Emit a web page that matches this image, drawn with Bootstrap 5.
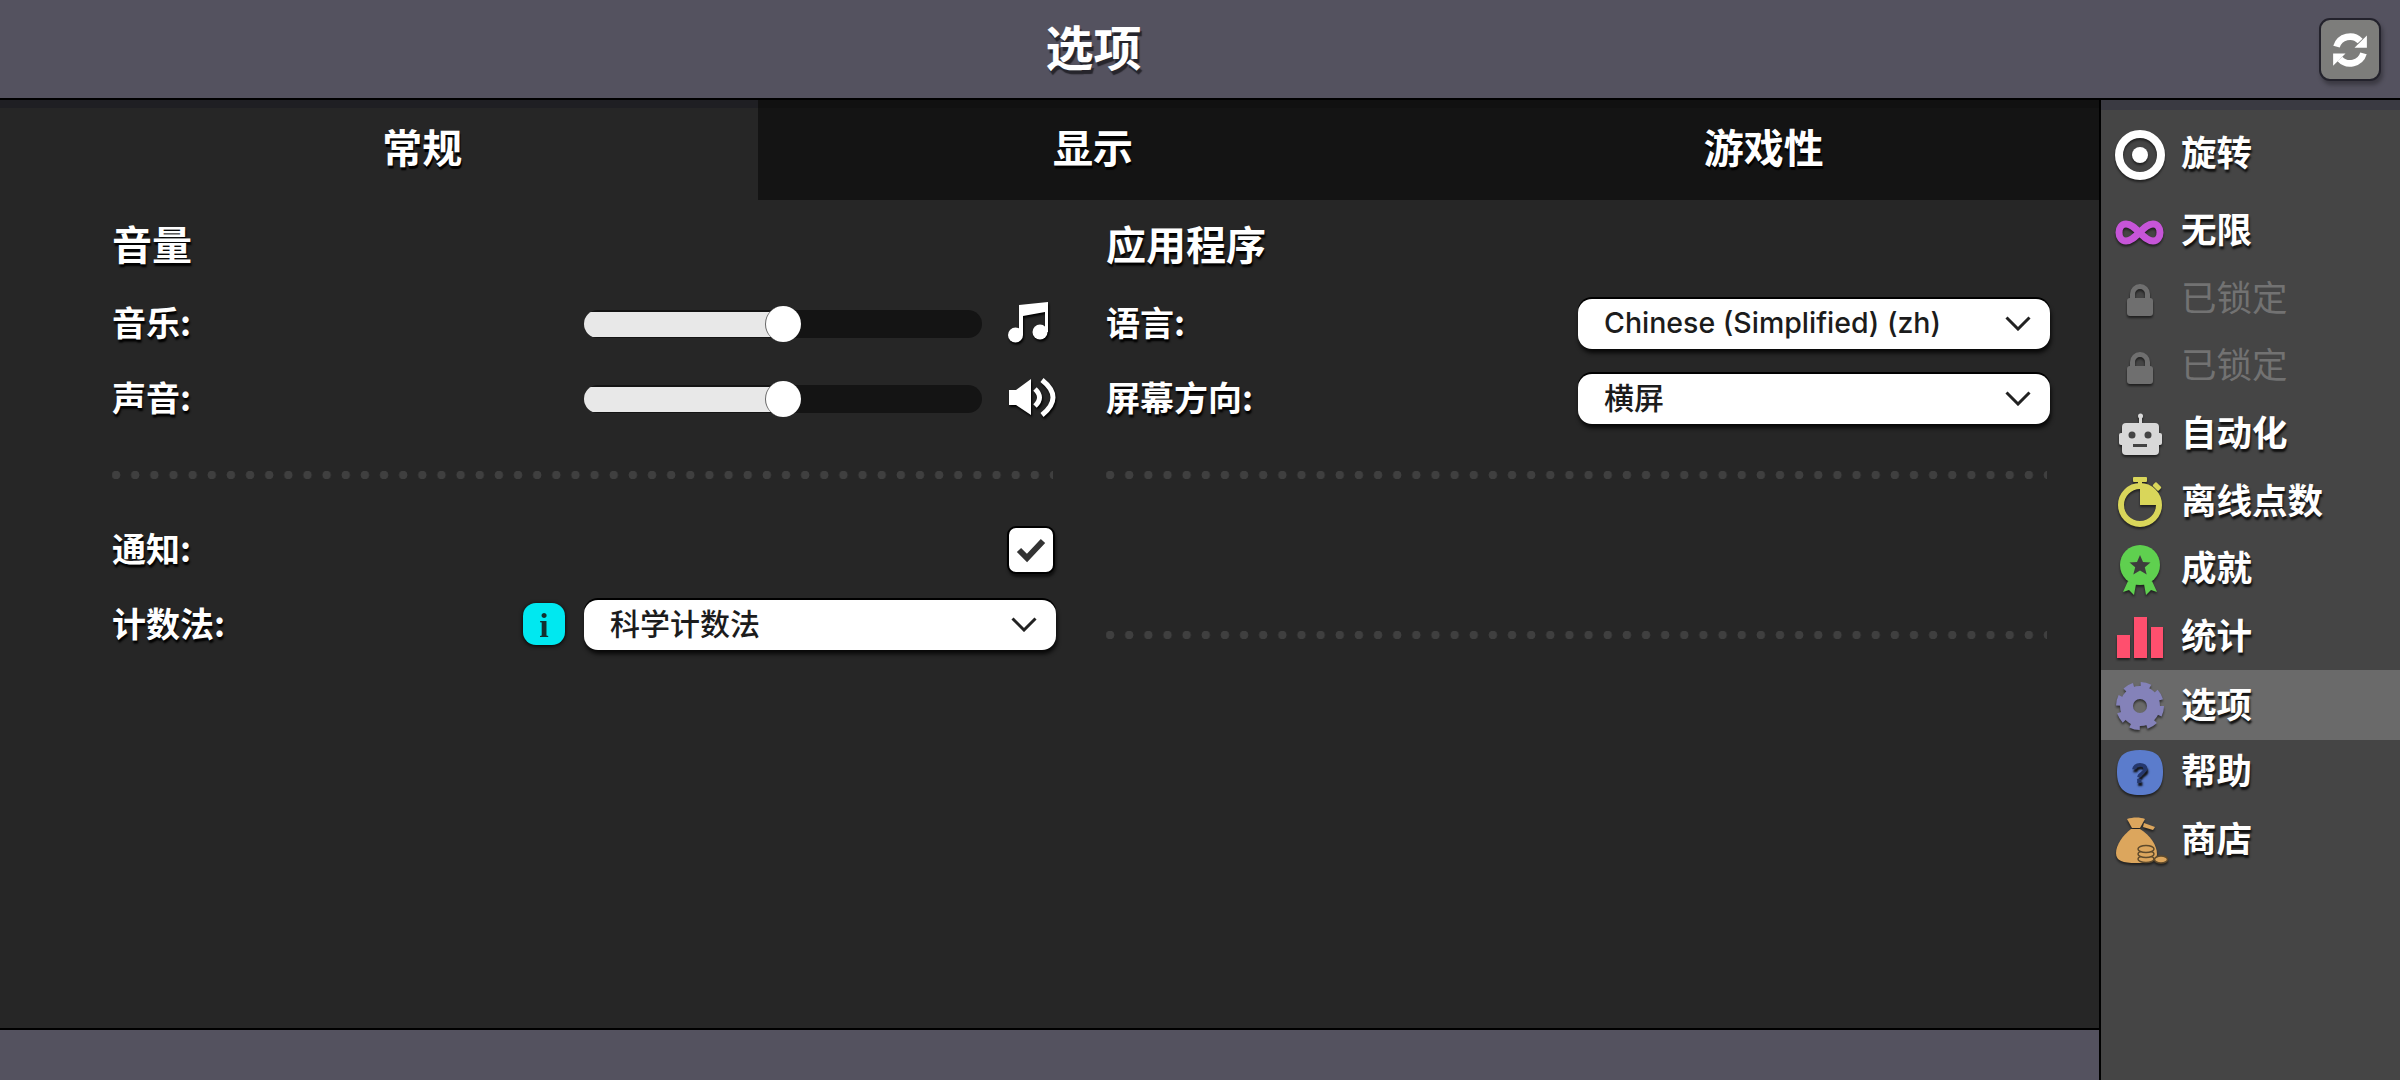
<!DOCTYPE html>
<html lang="zh-CN">
  <head>
    <meta charset="UTF-8" />
    <meta name="viewport" content="width=device-width, initial-scale=1.0" />
    <title>选项</title>
    <link
      href="https://cdn.jsdelivr.net/npm/bootstrap@5.3.0/dist/css/bootstrap.min.css"
      rel="stylesheet"
    />
    <style>
      html,
      body {
        height: 1080px;
        overflow: hidden;
      }

      body {
        background: #54525f;
        color: #fff;
        font-family: "Noto Sans CJK SC", sans-serif;
        font-weight: 700;
      }

      /* top bar */
      .top-bar {
        height: 100px;
        background: #54525f;
        border-bottom: 2px solid #000;
        flex: none;
      }

      .top-title {
        width: 2013px;
        margin-left: 87px;
        font-size: 48px;
        line-height: 90px;
        text-shadow: 2px 4px 1px #26252c;
      }

      .refresh-btn {
        width: 62px;
        height: 63px;
        margin-top: 18px;
        margin-right: 19px;
        padding: 0;
        background: #7d7d7b;
        border: 2px solid #23222c;
        border-radius: 11px;
        box-shadow: 2px 4px 4px rgba(0, 0, 0, 0.3);
      }

      .refresh-btn:hover {
        background: #7d7d7b;
      }

      /* left panel */
      .left-panel {
        width: 2101px;
        flex: none;
        border-right: 2px solid #000;
      }

      .tab-strip {
        height: 100px;
        padding-left: 87px;
        background: #262626;
        box-shadow: inset 0 8px 0 #1f1f23;
        flex: none;
      }

      .tab-item {
        width: 671px;
        height: 100px;
        padding: 0;
        padding-bottom: 8px;
        color: #fff;
        font-size: 40px;
        font-weight: 700;
        background: #141414;
        border: 0;
        border-radius: 0;
        box-shadow: inset 0 8px 0 #111;
        text-shadow: 1px 3px 1px #000;
      }

      .tab-item:hover,
      .tab-item:active {
        color: #fff;
        background: #141414;
      }

      .tab-item.is-open,
      .tab-item.is-open:hover {
        background: #262626;
        box-shadow: inset 0 8px 0 #1f1f23;
      }

      .pane {
        height: 830px;
        padding: 9px 50px 0 112px;
        gap: 50px;
        background: #262626;
        border-bottom: 2px solid #000;
        flex: none;
      }

      .pane-col {
        width: 944px;
        flex: none;
      }

      .group-title {
        height: 75px;
        line-height: 69px;
        margin: 0;
        font-size: 40px;
        font-weight: 700;
        text-shadow: 1px 3px 2px #000;
      }

      .opt-row {
        height: 75px;
      }

      .opt-label {
        font-size: 34px;
        text-shadow: 1px 3px 2px #000;
      }

      .dots-line {
        height: 76px;
        margin-right: 3px;
        background-image: radial-gradient(circle, #3f3f3f 4px, transparent 4.5px);
        background-size: 19.15px 10px;
        background-position: -5.500px 36px;
        background-repeat: repeat-x;
      }

      .blank-row {
        height: 84px;
      }

      /* slider */
      .vol-slider {
        width: 398px;
        margin-top: 4px;
      }

      .vol-track {
        height: 28px;
        background: #141414;
        border-radius: 14px;
      }

      .vol-fill {
        height: 25px;
        margin-top: 2px;
        background: #e8e8e8;
      }

      .vol-knob {
        top: -4px;
        width: 36px;
        height: 36px;
        margin-left: -18px;
        background: #fff;
        border-left: 1px solid #666;
        border-radius: 50%;
      }

      .vol-icon {
        width: 48px;
        height: 42px;
        margin-left: 26px;
        margin-top: 3px;
        overflow: visible;
        filter: drop-shadow(1px 2px 1px #000);
      }

      /* checkbox and dropdown */
      .tick-box {
        width: 48px;
        height: 48px;
        margin-top: 4px;
        margin-right: 1px;
        background: #fff;
        border: 2px solid #000;
        border-radius: 9px;
        box-shadow: 1px 3px 3px rgba(0, 0, 0, 0.6);
      }

      .pick-box {
        width: 472px;
        height: 50px;
        margin-top: 4px;
        padding: 0 19px 0 26px;
        color: #1c1c1c;
        font-family: "Inter", "Noto Sans CJK SC", sans-serif;
        font-size: 30px;
        font-weight: 500;
        background: #fff;
        border: 0;
        border-radius: 14px;
        box-shadow: 1px 4px 4px rgba(0, 0, 0, 0.8), 0 -2px 0 #000;
      }

      .pick-box:hover {
        color: #1c1c1c;
        background: #fff;
      }

      .pick-latin {
        font-size: 28.500px;
      }

      .info-ico {
        width: 42px;
        height: 42px;
        margin-top: 3px;
        margin-right: 19px;
        filter: drop-shadow(0 1px 2px #000);
      }

      /* sidebar */
      .side-panel {
        flex: 1;
        padding-top: 20px;
        background: #454545;
        box-shadow: inset 0 10px 0 #3a3a42;
      }

      .side-item {
        height: 67.6px;
        padding: 0 0 0 13px;
        gap: 15px;
        color: #fff;
        font-size: 35.500px;
        font-weight: 700;
        background: transparent;
        border: 0;
        border-radius: 0;
        text-shadow: 1px 3px 2px #111;
      }

      .side-item:hover {
        color: #fff;
      }

      .side-item span {
        padding-bottom: 6px;
      }

      .side-item svg {
        width: 52px;
        height: 50px;
        flex: none;
        overflow: visible;
        filter: drop-shadow(0 2px 1px rgba(0, 0, 0, 0.55));
      }

      .side-item.first-item {
        height: 68px;
        margin-bottom: 9px;
      }

      .side-item.is-locked {
        color: #727272;
        font-weight: 400;
        text-shadow: none;
      }

      .side-item.is-current {
        height: 70px;
        margin-bottom: -2.4px;
        background: #6a6a6a;
      }

      .bottom-strip {
        flex: 1;
        background: #54525f;
      }
    </style>
  </head>
  <body>
    <div class="d-flex flex-column vh-100">
      <div class="top-bar d-flex">
        <div class="top-title text-center">选项</div>
        <button class="refresh-btn btn d-flex align-items-center justify-content-center ms-auto">
          <svg width="36" height="36" viewBox="0 0 32 32" fill="#fff">
            <path d="M4 13A12.5 12.5 0 0 1 25 8" fill="none" stroke="#fff" stroke-width="6" />
            <path d="M31 3V14H20Z" />
            <path d="M28 19A12.5 12.5 0 0 1 7 24" fill="none" stroke="#fff" stroke-width="6" />
            <path d="M1 30V19H12Z" />
          </svg>
        </button>
      </div>

      <div class="d-flex flex-grow-1">
        <div class="left-panel d-flex flex-column">
          <div class="tab-strip d-flex">
            <button class="tab-item btn is-open">常规</button>
            <button class="tab-item btn">显示</button>
            <button class="tab-item btn">游戏性</button>
          </div>

          <div class="pane d-flex">
            <div class="pane-col">
              <h5 class="group-title">音量</h5>

              <div class="opt-row d-flex align-items-center">
                <span class="opt-label me-auto">音乐:</span>
                <div class="vol-slider position-relative">
                  <div class="vol-track progress">
                    <div class="vol-fill progress-bar" style="width: 50%"></div>
                  </div>
                  <div class="vol-knob position-absolute" style="left: 50%"></div>
                </div>
                <svg class="vol-icon" viewBox="0 0 48 42" fill="#fff">
                  <path d="M11 3 40 0V30H37V10L15 14V33H11Z" />
                  <circle cx="7.5" cy="33" r="7.5" />
                  <circle cx="32" cy="30" r="7.5" />
                </svg>
              </div>

              <div class="opt-row d-flex align-items-center">
                <span class="opt-label me-auto">声音:</span>
                <div class="vol-slider position-relative">
                  <div class="vol-track progress">
                    <div class="vol-fill progress-bar" style="width: 50%"></div>
                  </div>
                  <div class="vol-knob position-absolute" style="left: 50%"></div>
                </div>
                <svg class="vol-icon" viewBox="0 0 48 42" fill="#fff">
                  <path d="M1 13H8L23 2V38L8 28H1Z" />
                  <path d="M27 12Q36 20.5 27 29" fill="none" stroke="#fff" stroke-width="5" />
                  <path d="M34 3Q56 20.5 34 38" fill="none" stroke="#fff" stroke-width="5" />
                </svg>
              </div>

              <div class="dots-line"></div>

              <div class="opt-row d-flex align-items-center">
                <span class="opt-label me-auto">通知:</span>
                <div class="tick-box d-flex align-items-center justify-content-center">
                  <svg width="30" height="26" viewBox="0 0 30 26">
                    <path d="M3 13 11 21 27 4" fill="none" stroke="#333" stroke-width="6" />
                  </svg>
                </div>
              </div>

              <div class="opt-row d-flex align-items-center">
                <span class="opt-label me-auto">计数法:</span>
                <svg class="info-ico" viewBox="0 0 42 42">
                  <rect width="42" height="42" rx="13" fill="#00e8f0" />
                  <text x="21" y="34" text-anchor="middle" font-family="Liberation Serif, serif" font-weight="700" font-size="34" fill="#12302f">i</text>
                </svg>
                <button class="pick-box btn d-flex align-items-center justify-content-between">
                  <span>科学计数法</span>
                  <svg width="26" height="15" viewBox="0 0 26 15">
                    <path d="M1.5 1.5 13 13 24.5 1.5" fill="none" stroke="#222" stroke-width="3" />
                  </svg>
                </button>
              </div>
            </div>

            <div class="pane-col">
              <h5 class="group-title">应用程序</h5>

              <div class="opt-row d-flex align-items-center">
                <span class="opt-label me-auto">语言:</span>
                <button class="pick-box btn d-flex align-items-center justify-content-between">
                  <span class="pick-latin">Chinese (Simplified) (zh)</span>
                  <svg width="26" height="15" viewBox="0 0 26 15">
                    <path d="M1.5 1.5 13 13 24.5 1.5" fill="none" stroke="#222" stroke-width="3" />
                  </svg>
                </button>
              </div>

              <div class="opt-row d-flex align-items-center">
                <span class="opt-label me-auto">屏幕方向:</span>
                <button class="pick-box btn d-flex align-items-center justify-content-between">
                  <span>横屏</span>
                  <svg width="26" height="15" viewBox="0 0 26 15">
                    <path d="M1.5 1.5 13 13 24.5 1.5" fill="none" stroke="#222" stroke-width="3" />
                  </svg>
                </button>
              </div>

              <div class="dots-line"></div>
              <div class="blank-row"></div>
              <div class="dots-line"></div>
            </div>
          </div>

          <div class="bottom-strip"></div>
        </div>

        <div class="side-panel d-flex flex-column">
          <button class="side-item first-item btn d-flex align-items-center">
            <svg viewBox="0 0 52 50">
              <circle cx="26" cy="26" r="21" fill="none" stroke="#fff" stroke-width="8" />
              <circle cx="26" cy="26" r="8" fill="#fff" />
            </svg>
            <span>旋转</span>
          </button>

          <button class="side-item btn d-flex align-items-center">
            <svg viewBox="0 0 52 50">
              <path
                d="M25.5 26.5C21 22 17 18 12 18 7.500 18 5 22 5 26.500 5 31 7.500 35 12 35 17 35 21 31 25.5 26.5 30 22 34 18 39 18 43.500 18 46 22 46 26.500 46 31 43.500 35 39 35 34 35 30 31 25.5 26.5Z"
                fill="none"
                stroke="#c655d8"
                stroke-width="7"
              />
            </svg>
            <span>无限</span>
          </button>

          <button class="side-item is-locked btn d-flex align-items-center">
            <svg viewBox="0 0 52 50">
              <path d="M18.5 26V21a7.500 7.500 0 0 1 15 0V26" fill="none" stroke="#6f6f6f" stroke-width="5" />
              <rect x="13" y="25" width="26" height="18" rx="3" fill="#6f6f6f" />
            </svg>
            <span>已锁定</span>
          </button>

          <button class="side-item is-locked btn d-flex align-items-center">
            <svg viewBox="0 0 52 50">
              <path d="M18.5 26V21a7.500 7.500 0 0 1 15 0V26" fill="none" stroke="#6f6f6f" stroke-width="5" />
              <rect x="13" y="25" width="26" height="18" rx="3" fill="#6f6f6f" />
            </svg>
            <span>已锁定</span>
          </button>

          <button class="side-item btn d-flex align-items-center">
            <svg viewBox="0 0 52 50">
              <circle cx="26.500" cy="7" r="2.500" fill="#d8d8d8" />
              <rect x="25" y="7" width="3" height="8" fill="#d8d8d8" />
              <rect x="5" y="24" width="6" height="12" rx="2" fill="#d8d8d8" />
              <rect x="42" y="24" width="6" height="12" rx="2" fill="#d8d8d8" />
              <rect x="8" y="14" width="37" height="32" rx="4" fill="#d8d8d8" />
              <circle cx="18" cy="26" r="3.500" fill="#444" />
              <circle cx="34" cy="26" r="3.500" fill="#444" />
              <rect x="19" y="35" width="14" height="3" fill="#444" />
            </svg>
            <span>自动化</span>
          </button>

          <button class="side-item btn d-flex align-items-center">
            <svg viewBox="0 0 52 50" fill="#d9d65a">
              <rect x="19" y="1" width="14" height="5" rx="1" />
              <rect x="24" y="5" width="4" height="6" />
              <rect x="39" y="8" width="8" height="5" rx="1" transform="rotate(45 43 10.500)" />
              <circle cx="26" cy="29" r="19" fill="none" stroke="#d9d65a" stroke-width="6" />
              <path d="M26 29V12A17 17 0 0 1 43 29Z" />
            </svg>
            <span>离线点数</span>
          </button>

          <button class="side-item btn d-flex align-items-center">
            <svg viewBox="0 0 52 50" fill="#5fd04f">
              <path d="M14 37 22 40 20 51 15 46 9 48Z" />
              <path d="M30 40 38 37 43 48 37 46 32 51Z" />
              <circle cx="26" cy="21" r="20" />
              <path
                d="M26 11 29 18 36.500 18.500 30.800 23.300 32.700 30.600 26 26.500 19.300 30.600 21.200 23.300 15.500 18.500 23 18Z"
                fill="#3d3d3d"
              />
            </svg>
            <span>成就</span>
          </button>

          <button class="side-item btn d-flex align-items-center">
            <svg viewBox="0 0 52 50" fill="#ff4f6e">
              <rect x="3" y="24" width="13" height="23" />
              <rect x="20" y="6" width="13" height="41" />
              <rect x="37" y="16" width="12" height="31" />
            </svg>
            <span>统计</span>
          </button>

          <button class="side-item is-current btn d-flex align-items-center">
            <svg viewBox="0 0 52 50">
              <circle cx="26" cy="26" r="21" fill="none" stroke="#8482b9" stroke-width="6" stroke-dasharray="9.500 7" />
              <circle cx="26" cy="26" r="13.500" fill="none" stroke="#8482b9" stroke-width="13" />
            </svg>
            <span>选项</span>
          </button>

          <button class="side-item btn d-flex align-items-center">
            <svg viewBox="0 0 52 50">
              <path d="M26 3C42 3 49 9 49 25 49 41 42 48 26 48 10 48 3 41 3 25 3 9 10 3 26 3Z" fill="#5b7ccc" />
              <text x="26" y="36" text-anchor="middle" font-family="Liberation Sans, sans-serif" font-weight="700" font-size="30" fill="#25386e">?</text>
            </svg>
            <span>帮助</span>
          </button>

          <button class="side-item btn d-flex align-items-center">
            <svg viewBox="0 0 52 50" fill="#dca65d">
              <path d="M13 5C19 3 26 3 31 5L26 14H18Z" />
              <path d="M30 9 41 13 39 16 29 13Z" />
              <path d="M17 15H26C36 21 43 31 43 40 43 47 35 49 22 49 9 49 2 47 2 39 2 31 9 21 17 15Z" />
              <g stroke="#5e4a2c" stroke-width="1.500">
                <ellipse cx="32" cy="45" rx="8" ry="3.500" />
                <ellipse cx="32" cy="40" rx="8" ry="3.500" />
                <ellipse cx="32" cy="35" rx="8" ry="3.500" />
                <ellipse cx="47" cy="45.500" rx="6.500" ry="3.500" />
              </g>
            </svg>
            <span>商店</span>
          </button>
        </div>
      </div>
    </div>
  </body>
</html>
